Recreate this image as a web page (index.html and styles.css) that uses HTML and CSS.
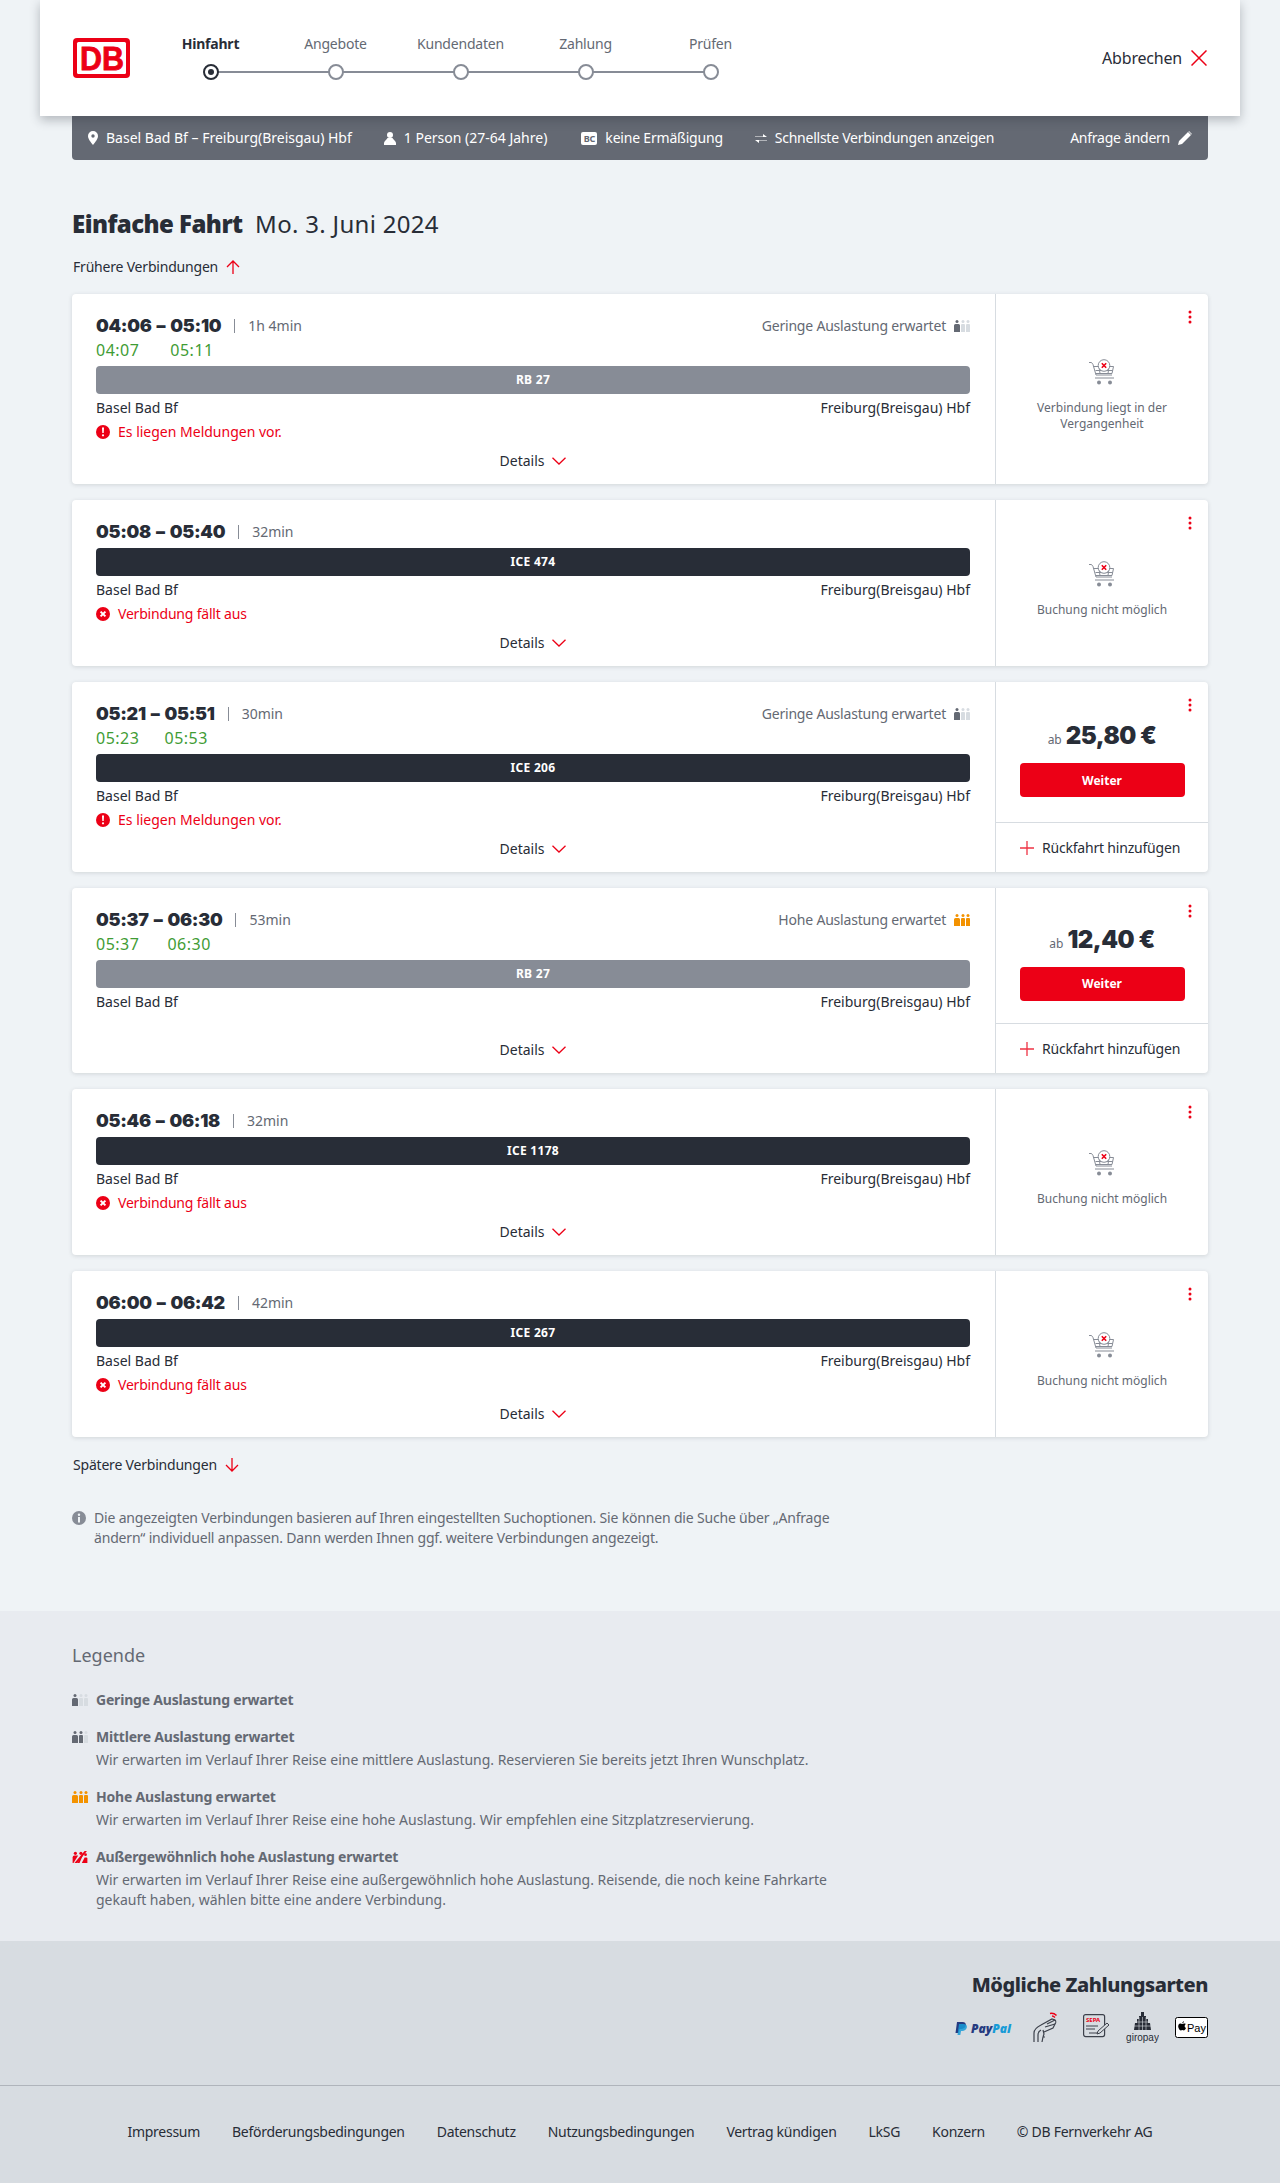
FILE: index.html
```html
<!DOCTYPE html>
<html lang="de">
<head>
  <meta charset="UTF-8" />
  <meta name="viewport" content="width=device-width, initial-scale=1.0"/>
  <title>Angebote - Einfache Fahrt</title>
  <link rel="stylesheet" href="styles.css">
</head>
<body>
  <!-- shared icons -->
  <svg class="sprite" aria-hidden="true">
    <symbol id="load1" viewBox="0 0 16 12">
      <g fill="#646973"><circle cx="3" cy="1.5" r="1.5"/><path d="M0 5.5a1.5 1.5 0 0 1 1.5-1.5h3A1.5 1.5 0 0 1 6 5.5V12H0z"/></g>
      <g fill="#d7dce1"><circle cx="9" cy="1.5" r="1.5"/><path d="M7 5a1 1 0 0 1 1-1h2a1 1 0 0 1 1 1v7H7z"/><circle cx="14" cy="1.5" r="1.5"/><path d="M12 5a1 1 0 0 1 1-1h2a1 1 0 0 1 1 1v7h-4z"/></g>
    </symbol>
    <symbol id="load2" viewBox="0 0 16 12">
      <g fill="#646973"><circle cx="3" cy="1.5" r="1.5"/><path d="M0 5.5a1.5 1.5 0 0 1 1.5-1.5h3A1.5 1.5 0 0 1 6 5.5V12H0z"/><circle cx="9" cy="1.5" r="1.5"/><path d="M7 5a1 1 0 0 1 1-1h2a1 1 0 0 1 1 1v7H7z"/></g>
      <g fill="#d7dce1"><circle cx="14" cy="1.5" r="1.5"/><path d="M12 5a1 1 0 0 1 1-1h2a1 1 0 0 1 1 1v7h-4z"/></g>
    </symbol>
    <symbol id="load3" viewBox="0 0 16 12">
      <g fill="#f39200"><circle cx="3" cy="1.5" r="1.5"/><path d="M0 5.5a1.5 1.5 0 0 1 1.5-1.5h3A1.5 1.5 0 0 1 6 5.5V12H0z"/><circle cx="9" cy="1.5" r="1.5"/><path d="M7 5a1 1 0 0 1 1-1h2a1 1 0 0 1 1 1v7H7z"/><circle cx="14" cy="1.5" r="1.5"/><path d="M12 5a1 1 0 0 1 1-1h2a1 1 0 0 1 1 1v7h-4z"/></g>
    </symbol>
    <symbol id="load4" viewBox="0 0 16 13">
      <g fill="#ec0016"><circle cx="3" cy="2.500" r="1.700"/><path d="M0 7a2 2 0 0 1 2-2h4l-5 8H0z"/><circle cx="9" cy="2.500" r="1.700"/><path d="M5 13l5-8h1l-3.500 8z"/><path d="M10 13l3-6h2a1 1 0 0 1 1 1v5z"/><circle cx="14" cy="4" r="1.500"/><path d="M2 13L13 0l2.500 0L5 13z"/></g>
    </symbol>
    <symbol id="cart" viewBox="0 0 26 26">
      <g fill="none" stroke="#878c96" stroke-width="1">
        <path d="M0 3.500h2.500l1.500 2 3 10.500h16"/>
        <path d="M4.500 7.500h5M17.500 7.500h7l-1.500 7H7"/>
        <path d="M6.500 11.500h17M10 7.500l1 7M20 7.500l-1 7"/>
        <path d="M6 19h19"/>
      </g>
      <circle cx="15" cy="6.500" r="5.800" fill="#fff" stroke="#878c96"/>
      <path d="M12.800 4.300l4.400 4.400M17.200 4.300l-4.400 4.400" stroke="#ec0016" stroke-width="1.600"/>
      <circle cx="10" cy="23.500" r="2" fill="#878c96"/><circle cx="21" cy="23.500" r="2" fill="#878c96"/>
    </symbol>
    <symbol id="chevron" viewBox="0 0 14 8"><path d="M.5.800L7 7l6.500-6.200" fill="none" stroke="#ec0016" stroke-width="1.300"/></symbol>
    <symbol id="plus" viewBox="0 0 14 14"><path d="M7 0v14M0 7h14" stroke="#ec0016" stroke-width="1.300" opacity=".8"/></symbol>
    <symbol id="warn" viewBox="0 0 14 14"><circle cx="7" cy="7" r="7" fill="#ec0016"/><path d="M6 2.500h2l-.3 5.500H6.300z" fill="#fff"/><circle cx="7" cy="10.300" r="1.100" fill="#fff"/></symbol>
    <symbol id="cancelled" viewBox="0 0 14 14"><circle cx="7" cy="7" r="7" fill="#ec0016"/><path d="M4.600 4.600l4.800 4.800M9.400 4.600l-4.800 4.800" stroke="#fff" stroke-width="2"/></symbol>
    <symbol id="dots" viewBox="0 0 4 14"><g fill="#ec0016"><circle cx="2" cy="2" r="1.500"/><circle cx="2" cy="7" r="1.500"/><circle cx="2" cy="12" r="1.500"/></g></symbol>
  </svg>

  <header class="top">
    <svg class="logo" viewBox="0 0 57 40">
      <rect width="57" height="40" rx="4" fill="#ec0016"/>
      <rect x="4" y="4" width="49" height="32" rx="1.500" fill="#fff"/>
      <text class="logo-text" x="7" y="32" textLength="44" lengthAdjust="spacingAndGlyphs">DB</text>
    </svg>
    <ol class="steps">
      <li class="step active"><span>Hinfahrt</span><i></i></li>
      <li class="step"><span>Angebote</span><i></i></li>
      <li class="step"><span>Kundendaten</span><i></i></li>
      <li class="step"><span>Zahlung</span><i></i></li>
      <li class="step"><span>Prüfen</span><i></i></li>
    </ol>
    <a class="cancel">Abbrechen
      <svg viewBox="0 0 16 16"><path d="M.5.500l15 15M15.500.500l-15 15" stroke="#ec0016" stroke-width="1.500"/></svg>
    </a>
  </header>

  <div class="wrap">
    <div class="request">
      <div class="request-item">
        <svg class="pin" viewBox="0 0 10 14"><path fill-rule="evenodd" d="M5 0a5 5 0 0 1 5 5c0 3-3 6.500-5 9-2-2.500-5-6-5-9a5 5 0 0 1 5-5zm0 3.300a1.700 1.700 0 1 0 0 3.400 1.700 1.700 0 0 0 0-3.400z" fill="#fff"/></svg>
        Basel Bad Bf – Freiburg(Breisgau) Hbf
      </div>
      <div class="request-item">
        <svg class="person" viewBox="0 0 12 13"><circle cx="6" cy="3" r="3" fill="#fff"/><path d="M3.500 6h5c.8 2 3.500 3 3.500 5v2H0v-2c0-2 2.700-3 3.500-5z" fill="#fff"/></svg>
        1 Person (27-64 Jahre)
      </div>
      <div class="request-item discount">
        <span class="bc">BC</span>
        keine Ermäßigung
      </div>
      <div class="request-item narrow">
        <svg class="swap" viewBox="0 0 12 9"><path d="M0 2.500h8V0l4 3H0zM12 6.500H4V9L0 6h12z" fill="#fff"/></svg>
        Schnellste Verbindungen anzeigen
      </div>
      <a class="change narrow">Anfrage ändern
        <svg viewBox="0 0 14 14"><path d="M0 14l1-4L10 1l3 3-9 9zM11 0l3 3-.500.500-3-3z" fill="#fff"/></svg>
      </a>
    </div>

    <h1 class="title"><strong>Einfache Fahrt</strong> Mo. 3. Juni 2024</h1>

    <a class="more">Frühere Verbindungen
      <svg viewBox="0 0 14 14"><path d="M7 14V1M1 7l6-6 6 6" fill="none" stroke="#ec0016" stroke-width="1.300"/></svg>
    </a>

    <section class="card">
      <div class="card-main">
        <div class="times">
          <b class="time">04:06</b><b class="time dash">–</b><b class="time">05:10</b>
          <span class="duration">1h 4min</span>
          <span class="load">Geringe Auslastung erwartet <svg><use href="#load1"/></svg></span>
          <span class="rt">04:07</span><span class="rt rt-arr">05:11</span>
        </div>
        <div class="line rb">RB 27</div>
        <div class="stations"><span>Basel Bad Bf</span><span>Freiburg(Breisgau) Hbf</span></div>
        <div class="notice"><svg><use href="#warn"/></svg>Es liegen Meldungen vor.</div>
        <a class="details">Details <svg><use href="#chevron"/></svg></a>
      </div>
      <div class="card-side">
        <div class="side-top unavailable">
          <svg class="menu"><use href="#dots"/></svg>
          <svg class="cart"><use href="#cart"/></svg>
          <p>Verbindung liegt in der Vergangenheit</p>
        </div>
      </div>
    </section>

    <section class="card">
      <div class="card-main">
        <div class="times">
          <b class="time">05:08</b><b class="time dash">–</b><b class="time">05:40</b>
          <span class="duration">32min</span>
        </div>
        <div class="line ice">ICE 474</div>
        <div class="stations"><span>Basel Bad Bf</span><span>Freiburg(Breisgau) Hbf</span></div>
        <div class="notice cancelled"><svg><use href="#cancelled"/></svg>Verbindung fällt aus</div>
        <a class="details">Details <svg><use href="#chevron"/></svg></a>
      </div>
      <div class="card-side">
        <div class="side-top unavailable">
          <svg class="menu"><use href="#dots"/></svg>
          <svg class="cart"><use href="#cart"/></svg>
          <p>Buchung nicht möglich</p>
        </div>
      </div>
    </section>

    <section class="card">
      <div class="card-main">
        <div class="times">
          <b class="time">05:21</b><b class="time dash">–</b><b class="time">05:51</b>
          <span class="duration">30min</span>
          <span class="load">Geringe Auslastung erwartet <svg><use href="#load1"/></svg></span>
          <span class="rt">05:23</span><span class="rt rt-arr">05:53</span>
        </div>
        <div class="line ice">ICE 206</div>
        <div class="stations"><span>Basel Bad Bf</span><span>Freiburg(Breisgau) Hbf</span></div>
        <div class="notice"><svg><use href="#warn"/></svg>Es liegen Meldungen vor.</div>
        <a class="details">Details <svg><use href="#chevron"/></svg></a>
      </div>
      <div class="card-side">
        <div class="side-top">
          <svg class="menu"><use href="#dots"/></svg>
          <div class="price"><small>ab</small> 25,80 €</div>
          <button class="next">Weiter</button>
        </div>
        <a class="return"><svg><use href="#plus"/></svg>Rückfahrt hinzufügen</a>
      </div>
    </section>

    <section class="card">
      <div class="card-main">
        <div class="times">
          <b class="time">05:37</b><b class="time dash">–</b><b class="time">06:30</b>
          <span class="duration">53min</span>
          <span class="load">Hohe Auslastung erwartet <svg><use href="#load3"/></svg></span>
          <span class="rt">05:37</span><span class="rt rt-arr">06:30</span>
        </div>
        <div class="line rb">RB 27</div>
        <div class="stations"><span>Basel Bad Bf</span><span>Freiburg(Breisgau) Hbf</span></div>
        <a class="details">Details <svg><use href="#chevron"/></svg></a>
      </div>
      <div class="card-side">
        <div class="side-top">
          <svg class="menu"><use href="#dots"/></svg>
          <div class="price"><small>ab</small> 12,40 €</div>
          <button class="next">Weiter</button>
        </div>
        <a class="return"><svg><use href="#plus"/></svg>Rückfahrt hinzufügen</a>
      </div>
    </section>

    <section class="card">
      <div class="card-main">
        <div class="times">
          <b class="time">05:46</b><b class="time dash">–</b><b class="time">06:18</b>
          <span class="duration">32min</span>
        </div>
        <div class="line ice">ICE 1178</div>
        <div class="stations"><span>Basel Bad Bf</span><span>Freiburg(Breisgau) Hbf</span></div>
        <div class="notice cancelled"><svg><use href="#cancelled"/></svg>Verbindung fällt aus</div>
        <a class="details">Details <svg><use href="#chevron"/></svg></a>
      </div>
      <div class="card-side">
        <div class="side-top unavailable">
          <svg class="menu"><use href="#dots"/></svg>
          <svg class="cart"><use href="#cart"/></svg>
          <p>Buchung nicht möglich</p>
        </div>
      </div>
    </section>

    <section class="card">
      <div class="card-main">
        <div class="times">
          <b class="time">06:00</b><b class="time dash">–</b><b class="time">06:42</b>
          <span class="duration">42min</span>
        </div>
        <div class="line ice">ICE 267</div>
        <div class="stations"><span>Basel Bad Bf</span><span>Freiburg(Breisgau) Hbf</span></div>
        <div class="notice cancelled"><svg><use href="#cancelled"/></svg>Verbindung fällt aus</div>
        <a class="details">Details <svg><use href="#chevron"/></svg></a>
      </div>
      <div class="card-side">
        <div class="side-top unavailable">
          <svg class="menu"><use href="#dots"/></svg>
          <svg class="cart"><use href="#cart"/></svg>
          <p>Buchung nicht möglich</p>
        </div>
      </div>
    </section>

    <a class="more later">Spätere Verbindungen
      <svg viewBox="0 0 14 14"><path d="M7 0v13M1 7l6 6 6-6" fill="none" stroke="#ec0016" stroke-width="1.300"/></svg>
    </a>

    <div class="hint">
      <svg viewBox="0 0 14 14"><circle cx="7" cy="7" r="7" fill="#878c96"/><circle cx="7" cy="3.700" r="1.200" fill="#eff3f6"/><path d="M6 6h2v5.500H6z" fill="#eff3f6"/></svg>
      <p>Die angezeigten Verbindungen basieren auf Ihren eingestellten Suchoptionen. Sie können die Suche über „Anfrage ändern“ individuell anpassen. Dann werden Ihnen ggf. weitere Verbindungen angezeigt.</p>
    </div>
  </div>

  <section class="legend">
    <div class="wrap">
      <h2>Legende</h2>
      <div class="legend-item">
        <svg><use href="#load1"/></svg>
        <div><b>Geringe Auslastung erwartet</b></div>
      </div>
      <div class="legend-item">
        <svg><use href="#load2"/></svg>
        <div><b>Mittlere Auslastung erwartet</b>
          <p>Wir erwarten im Verlauf Ihrer Reise eine mittlere Auslastung. Reservieren Sie bereits jetzt Ihren Wunschplatz.</p></div>
      </div>
      <div class="legend-item">
        <svg><use href="#load3"/></svg>
        <div><b>Hohe Auslastung erwartet</b>
          <p>Wir erwarten im Verlauf Ihrer Reise eine hohe Auslastung. Wir empfehlen eine Sitzplatzreservierung.</p></div>
      </div>
      <div class="legend-item">
        <svg><use href="#load4"/></svg>
        <div><b>Außergewöhnlich hohe Auslastung erwartet</b>
          <p>Wir erwarten im Verlauf Ihrer Reise eine außergewöhnlich hohe Auslastung. Reisende, die noch keine Fahrkarte gekauft haben, wählen bitte eine andere Verbindung.</p></div>
      </div>
    </div>
  </section>

  <footer class="foot">
    <div class="wrap payment">
      <h2>Mögliche Zahlungsarten</h2>
      <div class="pay-icons">
        <svg class="pay-paypal" viewBox="0 0 62 32">
          <path d="M2 10h5.500c2.500 0 3.800 1.500 3.300 3.600-.5 2.300-2.300 3.400-4.600 3.400H4.500L3.700 21H.5z" fill="#253b80"/>
          <path d="M4 12h4.500c2.500 0 3.800 1.500 3.300 3.600-.5 2.300-2.300 3.400-4.600 3.400H6l-.7 4H2.500z" fill="#179bd7" opacity=".85"/>
          <text class="paypal-text" x="16" y="21"><tspan fill="#253b80">Pay</tspan><tspan fill="#179bd7">Pal</tspan></text>
        </svg>
        <svg class="pay-hand" viewBox="0 0 34 32">
          <g fill="none" stroke="#3c414b" stroke-width="1.200">
            <path d="M1 30V21c0-3 3-6 7-8l11-6 3 1c1 1 1 3 0 4l-2 4-9 4"/>
            <path d="M5 30v-7c0-2 1-4 3-5M10 18l1 4-1 3M9 30l1-5h2"/>
            <path d="M14 12l8-4M12 15l10-3"/>
          </g>
          <path d="M17 1.500c2-.5 5 .5 6.500 2M19 4c1 0 2 .5 3 1.500" fill="none" stroke="#ec0016" stroke-width="1.500"/>
        </svg>
        <svg class="pay-sepa" viewBox="0 0 27 32">
          <rect x=".6" y="2.600" width="21" height="22" rx="2" fill="none" stroke="#3c414b" stroke-width="1.200"/>
          <text class="sepa-text" x="3" y="10">SEPA</text>
          <path d="M3 14h12M3 17h9M6 21h8" stroke="#3c414b"/>
          <path d="M14 22l1-3 9-8 2 2-9 8z" fill="#d7dce1" stroke="#3c414b"/>
        </svg>
        <svg class="pay-giro" viewBox="0 0 33 32">
          <g fill="#282d37"><path d="M15 0h3v4h2v3h2v4h2l1 7H8l1-7h2V7h2V4h2z"/></g>
          <path d="M8 10h17M8 14h17M13 5v13M16.500 5v13M20 5v13" stroke="#d7dce1" stroke-width=".6"/>
          <text class="giro-text" x="16.500" y="29" text-anchor="middle">giropay</text>
        </svg>
        <svg class="pay-apple" viewBox="0 0 33 32">
          <rect x=".5" y="5.500" width="32" height="20" rx="2" fill="#fff" stroke="#000"/>
          <path d="M9.300 11.600c-.9-.1-1.600.5-2.100.5s-1-.5-1.800-.5c-1.700 0-2.900 2.300-1.600 4.800.5 1 1.200 2 2 2 .7 0 .9-.4 1.600-.4s.9.400 1.600.4c.8 0 1.600-1.200 2-2.300-1.700-.8-1.800-3.300-.2-4.200-.4-.2-1-.3-1.500-.3zM7.300 11.200c0-.9.800-1.800 1.700-1.900.1 1-.8 1.900-1.700 1.900z" fill="#000"/>
          <text class="apple-text" x="12" y="19.500">Pay</text>
        </svg>
      </div>
    </div>
    <nav class="foot-links">
      <a>Impressum</a>
      <a>Beförderungsbedingungen</a>
      <a>Datenschutz</a>
      <a>Nutzungsbedingungen</a>
      <a>Vertrag kündigen</a>
      <a>LkSG</a>
      <a>Konzern</a>
      <a>© DB Fernverkehr AG</a>
    </nav>
  </footer>
</body>
</html>
```

FILE: styles.css
```css
* {
  box-sizing: border-box;
}

body {
  margin: 0;
  background: #eff3f6;
  color: #282d37;
  font-family: "Noto Sans", sans-serif;
  font-size: 14px;
  line-height: 20px;
}

.sprite {
  display: none;
}

.wrap {
  width: 1136px;
  margin: 0 auto;
}

.narrow {
  letter-spacing: -0.25px;
}

/* header */
.top {
  position: relative;
  z-index: 2;
  display: flex;
  align-items: center;
  height: 116px;
  margin: 0 40px;
  padding: 0 33px;
  background: #fff;
  box-shadow: 0 4px 10px rgba(40, 45, 55, 0.3);
}

.logo {
  flex: none;
  width: 57px;
  height: 40px;
}

.logo-text {
  fill: #ec0016;
  stroke: #ec0016;
  stroke-width: 0.8px;
  font-family: "Liberation Sans", sans-serif;
  font-size: 33px;
  font-weight: 700;
}

.steps {
  display: flex;
  margin: 0 0 0 18px;
  padding: 0;
  list-style: none;
}

.step {
  position: relative;
  display: flex;
  flex-direction: column;
  align-items: center;
  width: 125px;
  color: #646973;
  letter-spacing: -0.2px;
}

.step span {
  height: 20px;
  margin-top: -2px;
}

.step i {
  position: relative;
  z-index: 1;
  width: 16px;
  height: 16px;
  margin-top: 10px;
  border: 2px solid #878c96;
  border-radius: 50%;
  background: #fff;
}

.step:not(:last-child)::after {
  content: "";
  position: absolute;
  left: 50%;
  bottom: 7px;
  width: 125px;
  height: 2px;
  background: #878c96;
}

.step.active {
  color: #282d37;
  font-weight: 700;
}

.step.active i {
  border-color: #282d37;
}

.step.active i::after {
  content: "";
  display: block;
  width: 6px;
  height: 6px;
  margin: 3px;
  border-radius: 50%;
  background: #282d37;
}

.cancel {
  display: flex;
  align-items: center;
  gap: 9px;
  margin-left: auto;
  font-size: 16px;
  letter-spacing: -0.2px;
}

.cancel svg {
  width: 16px;
  height: 16px;
}

/* request bar */
.request {
  display: flex;
  align-items: center;
  gap: 32px;
  height: 44px;
  padding: 0 16px;
  border-radius: 0 0 4px 4px;
  background: #646973;
  color: #fff;
}

.request-item {
  display: flex;
  align-items: center;
  gap: 8px;
}

.discount {
  margin-left: 2px;
  letter-spacing: -0.2px;
}

.pin {
  width: 10px;
  height: 14px;
}

.person {
  width: 12px;
  height: 13px;
}

.swap {
  width: 12px;
  height: 9px;
}

.bc {
  width: 16px;
  height: 13px;
  border-radius: 2px;
  background: #fff;
  color: #646973;
  font-size: 9px;
  font-weight: 700;
  line-height: 13px;
  text-align: center;
}

.change {
  display: flex;
  align-items: center;
  gap: 8px;
  margin-left: auto;
}

.change svg {
  width: 14px;
  height: 14px;
}

/* title */
.title {
  margin: 48px 0 15px;
  font-size: 24px;
  font-weight: 400;
  line-height: 32px;
  letter-spacing: 0.3px;
}

.title strong {
  margin-right: 6px;
  font-weight: 900;
  letter-spacing: -0.55px;
}

.more {
  display: flex;
  align-items: center;
  gap: 8px;
  height: 24px;
  margin: 0 0 15px 1px;
  letter-spacing: -0.2px;
}

.more svg {
  width: 14px;
  height: 14px;
}

.later {
  margin-top: 15px;
  margin-bottom: 31px;
}

/* connection cards */
.card {
  display: flex;
  min-height: 166px;
  margin-bottom: 16px;
  border-radius: 4px;
  background: #fff;
  box-shadow: 0 1px 4px rgba(40, 45, 55, 0.15);
}

.card:has(.return) {
  min-height: 185px;
}

.card-main {
  display: flex;
  flex-direction: column;
  flex: 1;
  min-width: 0;
  padding: 20px 25px 11px 24px;
}

.times {
  display: grid;
  grid-template-columns: auto auto auto auto 1fr;
  align-items: center;
  justify-content: start;
}

.time {
  height: 24px;
  font-family: Inter, "Noto Sans", sans-serif;
  font-size: 18px;
  font-weight: 900;
  line-height: 24px;
  letter-spacing: -0.3px;
}

.dash {
  padding: 0 5px;
}

.duration {
  position: relative;
  margin-left: 13px;
  padding-left: 14px;
  color: #646973;
}

.duration::before {
  content: "";
  position: absolute;
  left: 0;
  top: 3px;
  width: 1px;
  height: 14px;
  background: #878c96;
}

.load {
  display: flex;
  align-items: center;
  justify-content: flex-end;
  gap: 8px;
  color: #646973;
  letter-spacing: -0.2px;
}

.load svg {
  width: 16px;
  height: 12px;
}

.rt {
  grid-column: 1;
  height: 24px;
  color: #3f9c35;
  font-size: 16px;
  line-height: 24px;
  letter-spacing: 0.5px;
}

.rt-arr {
  grid-column: 3;
}

.line {
  height: 28px;
  margin-top: 4px;
  border-radius: 4px;
  color: #fff;
  font-size: 12px;
  font-weight: 700;
  line-height: 28px;
  letter-spacing: 0.3px;
  text-align: center;
}

.ice {
  background: #282d37;
}

.rb {
  background: #878c96;
}

.stations {
  display: flex;
  justify-content: space-between;
  height: 28px;
  line-height: 28px;
}

.notice {
  display: flex;
  align-items: center;
  gap: 8px;
  height: 20px;
  margin-bottom: 7px;
  color: #ec0016;
}

.notice.cancelled {
  letter-spacing: -0.2px;
}

.notice svg {
  width: 14px;
  height: 14px;
}

.details {
  display: flex;
  align-items: center;
  justify-content: center;
  gap: 8px;
  height: 24px;
  margin-top: auto;
}

.details svg {
  width: 14px;
  height: 8px;
}

.card-side {
  display: flex;
  flex-direction: column;
  flex: none;
  width: 213px;
  border-left: 1px solid #d7dce1;
}

.side-top {
  position: relative;
  display: flex;
  flex-direction: column;
  align-items: center;
  justify-content: center;
  flex: 1;
  padding-top: 13px;
}

.menu {
  position: absolute;
  top: 16px;
  right: 16px;
  width: 4px;
  height: 14px;
}

.cart {
  width: 26px;
  height: 26px;
}

.unavailable {
  padding-top: 12px;
}

.unavailable p {
  width: 160px;
  margin: 15px 0 0;
  color: #646973;
  font-size: 12px;
  line-height: 16px;
  text-align: center;
}

.price {
  display: flex;
  align-items: baseline;
  gap: 4px;
  height: 32px;
  font-family: Inter, "Noto Sans", sans-serif;
  font-size: 24px;
  font-weight: 900;
  line-height: 32px;
  letter-spacing: -0.5px;
}

.price small {
  color: #646973;
  font-family: "Noto Sans", sans-serif;
  font-size: 12px;
  font-weight: 400;
  letter-spacing: 0;
}

.next {
  width: 165px;
  height: 34px;
  margin-top: 11px;
  border: 0;
  border-radius: 4px;
  background: #ec0016;
  color: #fff;
  font-family: inherit;
  font-size: 12px;
  font-weight: 700;
}

.return {
  display: flex;
  align-items: center;
  gap: 8px;
  height: 50px;
  padding-left: 24px;
  border-top: 1px solid #d7dce1;
  letter-spacing: -0.2px;
}

.return svg {
  width: 14px;
  height: 14px;
}

/* hint */
.hint {
  display: flex;
  gap: 8px;
  margin-bottom: 63px;
  color: #646973;
  letter-spacing: -0.18px;
}

.hint svg {
  flex: none;
  width: 14px;
  height: 14px;
  margin-top: 3px;
}

.hint p {
  width: 760px;
  margin: 0;
}

/* legend */
.legend {
  padding: 32px 0 31px;
  background: #e8ebf0;
  color: #646973;
}

.legend h2 {
  margin: 0 0 23px;
  font-size: 18px;
  font-weight: 400;
  line-height: 24px;
}

.legend-item {
  display: flex;
  gap: 8px;
  margin-bottom: 17px;
}

.legend-item:last-child {
  margin-bottom: 0;
}

.legend-item b {
  letter-spacing: -0.2px;
}

.legend-item svg {
  flex: none;
  width: 16px;
  height: 12px;
  margin-top: 4px;
}

.legend-item p {
  width: 760px;
  margin: 3px 0 0;
  letter-spacing: -0.02px;
}

/* footer */
.foot {
  background: #d7dce1;
}

.payment {
  height: 144px;
  padding-top: 30px;
  text-align: right;
}

.payment h2 {
  margin: 0;
  font-size: 20px;
  font-weight: 800;
  line-height: 28px;
  letter-spacing: -0.45px;
}

.pay-icons {
  display: flex;
  justify-content: flex-end;
  gap: 16px;
  margin-top: 13px;
}

.pay-icons svg {
  height: 32px;
}

.pay-paypal {
  width: 62px;
}

.pay-hand {
  width: 34px;
}

.pay-sepa {
  width: 27px;
}

.pay-giro,
.pay-apple {
  width: 33px;
}

.paypal-text {
  font-family: "Open Sans", sans-serif;
  font-size: 12px;
  font-style: italic;
  font-weight: 800;
}

.sepa-text {
  fill: #ec0016;
  font-family: "Noto Sans", sans-serif;
  font-size: 6px;
  font-weight: 700;
}

.giro-text {
  fill: #282d37;
  font-family: "Liberation Sans", sans-serif;
  font-size: 10px;
}

.apple-text {
  fill: #000;
  font-family: "Liberation Sans", sans-serif;
  font-size: 11px;
}

.foot-links {
  display: flex;
  justify-content: center;
  align-items: center;
  gap: 32px;
  height: 98px;
  padding-bottom: 6px;
  border-top: 1px solid #afb4bb;
  letter-spacing: -0.28px;
}
```
